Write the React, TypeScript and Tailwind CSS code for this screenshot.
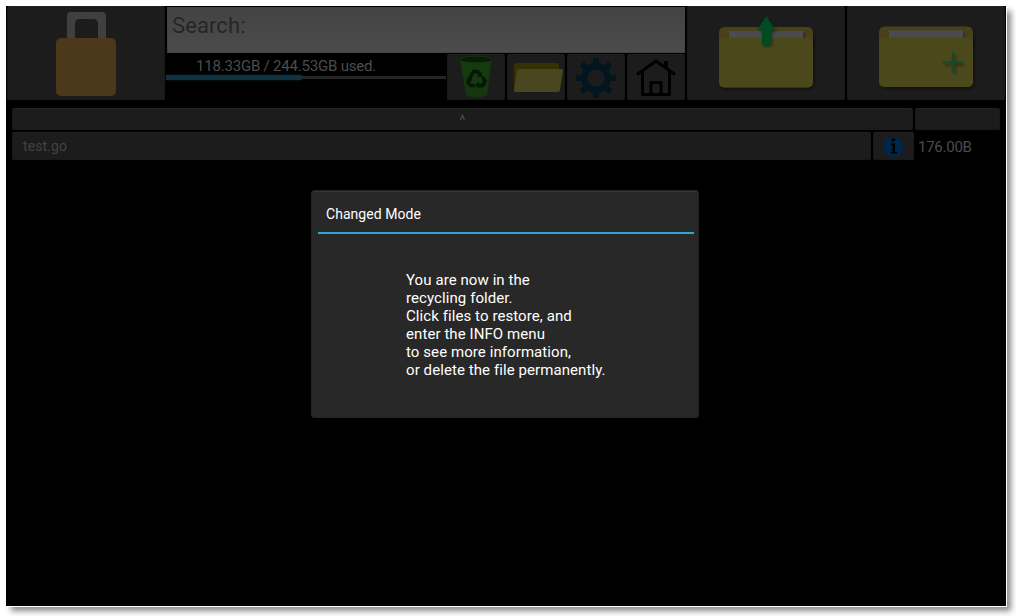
import type { ReactNode } from "react";

function Tile({ className = "", children }: { className?: string; children?: ReactNode }) {
  return (
    <div
      className={`flex shrink-0 overflow-hidden rounded-[2px] border border-[#191919] border-t-[#222222] bg-[#1c1c1c] ${className}`}
    >
      {children}
    </div>
  );
}

function LockIcon() {
  return (
    <svg width="156" height="92" viewBox="8 7 156 92">
      <path d="M67 40V16q0-4 4-4h31q4 0 4 4v24h-8V24q0-5-5-5H80q-5 0-5 5v16z" fill="#404040" />
      <rect x="56" y="38" width="60" height="58" rx="5" fill="#4c381b" />
    </svg>
  );
}

function BigFolder({ children, top }: { children: ReactNode; top: number }) {
  return (
    <svg width="156" height="92" viewBox="0 0 156 92">
      <defs>
        <filter id="soft" x="-20%" y="-20%" width="150%" height="150%">
          <feDropShadow dx="1.5" dy="2" stdDeviation="1.5" floodColor="#000" floodOpacity="0.4" />
        </filter>
      </defs>
      <g transform={`translate(0 ${top})`}>
        <g filter="url(#soft)">
          <path d="M31 18V6q0-6 6-6h82q6 0 6 6v12z" fill="#46431a" />
        </g>
        <rect x="41" y="4" width="74" height="10" fill="#4c4c4c" filter="url(#soft)" />
        <rect x="31" y="11" width="94" height="49.500" rx="5" fill="#4c481f" filter="url(#soft)" />
      </g>
      {children}
    </svg>
  );
}

function RecycleIcon() {
  return (
    <svg width="56" height="44" viewBox="448 55 56 44">
      <path d="M460 59h32l-5 36q-11 5-21 0z" fill="#14370e" />
      <path d="M460 60l2 14q4 10 23 12l2-2 4-24z" fill="#183b10" opacity=".5" />
      <ellipse cx="476" cy="59.5" rx="16" ry="3.3" fill="#071b05" stroke="#17380f" strokeWidth=".8" />
      <g fill="none" stroke="#061704" strokeWidth="3.5">
        <path d="M470.500 76.500l3-5h4l2 3" />
        <path d="M482.500 77l2.500 4-2 4.500h-5" />
        <path d="M474.500 85.500h-4l-2.500-3.500 2-4" />
      </g>
      <g fill="#061704">
        <path d="M482 71.5v5.5h-5z" />
        <path d="M479 81.500v7l-4-3.5z" />
        <path d="M467 77.5l5-1.5v5.5z" />
      </g>
    </svg>
  );
}

function SmallFolderIcon() {
  return (
    <svg width="56" height="44" viewBox="508 55 56 44">
      <path d="M514 65q0-2 2-2h41q2 0 2 2v25h-45z" fill="#353105" />
      <path d="M520 69h41q2 0 2 2l-3 19q-.4 2-3 2h-41q-2 0-2-2l3-19q.4-2 3-2z" fill="#4a461f" />
    </svg>
  );
}

const teeth = [0, 45, 90, 135, 180, 225, 270, 315];

function GearIcon() {
  return (
    <svg width="56" height="44" viewBox="568 55 56 44">
      <circle cx="596" cy="78" r="11.8" fill="none" stroke="#03151e" strokeWidth="6.5" />
      {teeth.map((angle) => (
        <rect key={angle} x="593" y="58" width="6" height="7" fill="#03151e" transform={`rotate(${angle} 596 78)`} />
      ))}
    </svg>
  );
}

function HomeIcon() {
  return (
    <svg width="56" height="44" viewBox="628 55 56 44" fill="none" stroke="#000" strokeWidth="3">
      <path d="M637 74.5L656 61l19 13.5" />
      <path d="M642.5 71v23.5h27V71" />
      <path d="M651 94V82.5h10V94" />
      <path d="M664 61h4v8l-4-3z" fill="#000" stroke="none" />
    </svg>
  );
}

function InfoIcon() {
  return (
    <svg width="39" height="26" viewBox="874 133 39 26">
      <circle cx="893.3" cy="147" r="10" fill="#00264a" />
      <path d="M891.7 138.5h3.2v2.8h-3.2zM891 143.5h4v8.5h2v1.5h-6.200v-1.500h1.700v-7h-1.500z" fill="#000" />
    </svg>
  );
}

function Toolbar() {
  return (
    <div className="flex h-[94px] gap-[2px] pl-px">
      <Tile className="h-[94px] w-[158px]">
        <LockIcon />
      </Tile>
      <div className="flex w-[518px] flex-col pt-px">
        <div className="h-[46px] border border-[#414141] bg-linear-to-b from-[#434343] to-[#4c4c4c] pl-1 text-[22px] leading-[36px] tracking-[0.1px] text-[#262626]">
          Search:
        </div>
        <div className="mt-px flex gap-[2px]">
          <div className="-ml-px w-[279px] shrink-0">
            <div className="h-[21px] pl-[30px] text-[15px] leading-[24px] tracking-[-0.2px] whitespace-nowrap text-[#4c4c4c]">
              118.33GB / 244.53GB used.
            </div>
            <div className="flex w-[280px] items-center">
              <div className="h-[5px] w-[136px] rounded-r-[2px] bg-[#103341] shadow-[0_0_3px_#0b2631]" />
              <div className="h-[3px] flex-1 bg-[#262626]" />
            </div>
          </div>
          <Tile className="h-[46px] w-[58px]"><RecycleIcon /></Tile>
          <Tile className="h-[46px] w-[58px]"><SmallFolderIcon /></Tile>
          <Tile className="h-[46px] w-[58px]"><GearIcon /></Tile>
          <Tile className="h-[46px] w-[58px]"><HomeIcon /></Tile>
        </div>
      </div>
      <Tile className="h-[94px] w-[158px]">
        <BigFolder top={20}>
          <path d="M78.300 9l9 14h-4.500v15h-9V23h-4.500z" fill="#004c23" filter="url(#soft)" />
        </BigFolder>
      </Tile>
      <Tile className="h-[94px] w-[158px]">
        <BigFolder top={19.5}>
          <path d="M95 55.500h20M105 45.500v20" stroke="#17492a" strokeWidth="2.500" filter="url(#soft)" />
        </BigFolder>
      </Tile>
    </div>
  );
}

function FileList() {
  return (
    <div className="mt-2 flex flex-col gap-[2px] pl-[6px] text-[#4c4c4c]">
      <div className="flex gap-[2px]">
        <Tile className="h-[22px] w-[901px] justify-center pt-px text-[14px] leading-[20px]">^</Tile>
        <Tile className="h-[22px] w-[85px]" />
      </div>
      <div className="flex gap-[2px]">
        <Tile className="h-[28px] w-[859px] pl-[10px] text-[14px] leading-[26px] tracking-[0.1px] text-[#434343]">test.go</Tile>
        <Tile className="h-[28px] w-[41px]"><InfoIcon /></Tile>
        <div className="pl-[2px] text-[15px] leading-[30px] tracking-[-0.25px]">176.00B</div>
      </div>
    </div>
  );
}

const message = [
  "You are now in the",
  "recycling folder.",
  "Click files to restore, and",
  "enter the INFO menu",
  "to see more information,",
  "or delete the file permanently.",
];

function Dialog() {
  return (
    <div className="absolute top-[184px] left-[305px] h-[228px] w-[388px] rounded-[3px] border border-[#222222] bg-[#282828] text-white shadow-[inset_0_1px_0_#353535]">
      <div className="mr-1 ml-[6px] h-[43px] border-b-2 border-[#2fa7d4] pt-[11px] pl-2 text-[14px] leading-[24px] tracking-[0.05px]">
        Changed Mode
      </div>
      <div className="pt-[37px] pl-[94px] text-[15px] leading-[18px] tracking-[0.08px] whitespace-nowrap">
        {message.map((line) => (
          <div key={line}>{line}</div>
        ))}
      </div>
    </div>
  );
}

export default function App() {
  return (
    <div className="h-[616px] w-[1016px] overflow-hidden bg-white p-[6px] font-[Roboto,sans-serif]">
      <div className="relative h-[600px] w-[1000px] bg-black shadow-[0_0_0_1px_#fff,5px_5px_6px_0px_#888]">
        <Toolbar />
        <FileList />
        <Dialog />
      </div>
    </div>
  );
}
